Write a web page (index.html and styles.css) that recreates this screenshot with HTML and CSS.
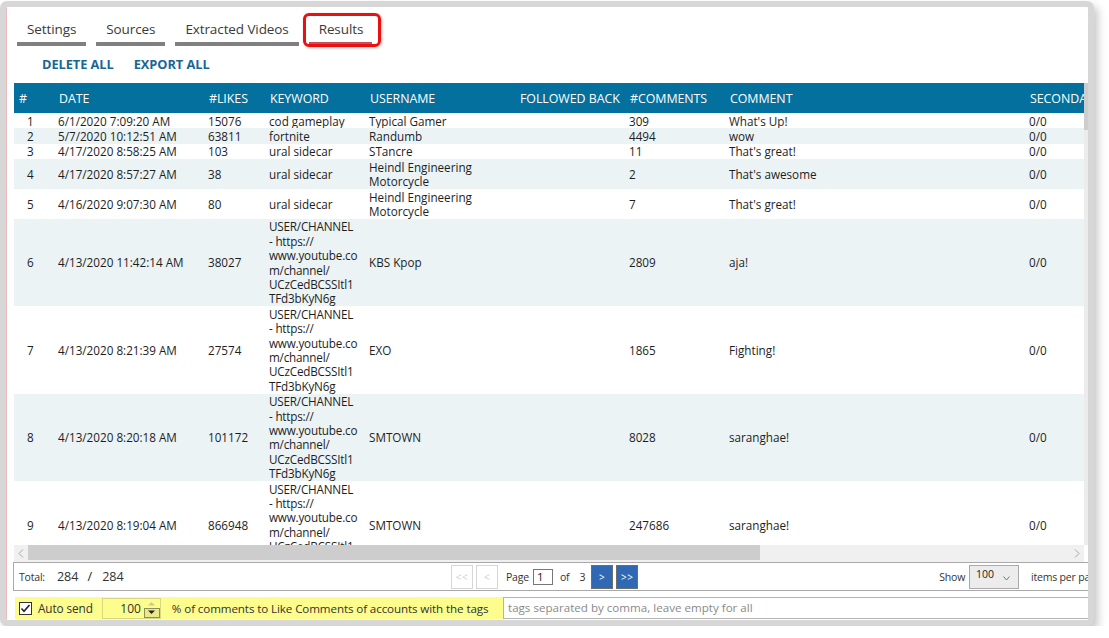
FILE: index.html
```html
<!DOCTYPE html>
<html>
<head>
<meta charset="utf-8">
<link rel="stylesheet" href="styles.css">
</head>
<body>
<div class="window">
  <div class="inner">
    <nav class="tabs">
      <div class="tab">Settings</div>
      <div class="tab">Sources</div>
      <div class="tab">Extracted Videos</div>
      <div class="tab active">Results</div>
    </nav>
    <div class="actions">
      <span class="action">DELETE ALL</span>
      <span class="action">EXPORT ALL</span>
    </div>
    <div class="grid-area">
      <div class="table-wrap">
        <div class="table-clip">
          <table class="results">
            <colgroup>
              <col class="c-num"><col class="c-date"><col class="c-likes"><col class="c-kw"><col class="c-user"><col class="c-fb"><col class="c-cc"><col class="c-com"><col class="c-sec">
            </colgroup>
            <thead>
              <tr><th>#</th><th>DATE</th><th>#LIKES</th><th>KEYWORD</th><th>USERNAME</th><th>FOLLOWED BACK</th><th>#COMMENTS</th><th>COMMENT</th><th>SECONDARY</th></tr>
            </thead>
            <tbody>
              <tr><td class="n">1</td><td>6/1/2020 7:09:20 AM</td><td>15076</td><td>cod gameplay</td><td>Typical Gamer</td><td></td><td>309</td><td>What's Up!</td><td>0/0</td></tr>
              <tr><td class="n">2</td><td>5/7/2020 10:12:51 AM</td><td>63811</td><td>fortnite</td><td>Randumb</td><td></td><td>4494</td><td>wow</td><td>0/0</td></tr>
              <tr><td class="n">3</td><td>4/17/2020 8:58:25 AM</td><td>103</td><td>ural sidecar</td><td>STancre</td><td></td><td>11</td><td>That's great!</td><td>0/0</td></tr>
              <tr><td class="n">4</td><td>4/17/2020 8:57:27 AM</td><td>38</td><td>ural sidecar</td><td>Heindl Engineering<br>Motorcycle</td><td></td><td>2</td><td>That's awesome</td><td>0/0</td></tr>
              <tr><td class="n">5</td><td>4/16/2020 9:07:30 AM</td><td>80</td><td>ural sidecar</td><td>Heindl Engineering<br>Motorcycle</td><td></td><td>7</td><td>That's great!</td><td>0/0</td></tr>
              <tr><td class="n">6</td><td>4/13/2020 11:42:14 AM</td><td>38027</td><td class="kw">USER/CHANNEL<br>- https://<br>www.youtube.co<br>m/channel/<br>UCzCedBCSSItl1<br>TFd3bKyN6g</td><td>KBS Kpop</td><td></td><td>2809</td><td>aja!</td><td>0/0</td></tr>
              <tr><td class="n">7</td><td>4/13/2020 8:21:39 AM</td><td>27574</td><td class="kw">USER/CHANNEL<br>- https://<br>www.youtube.co<br>m/channel/<br>UCzCedBCSSItl1<br>TFd3bKyN6g</td><td>EXO</td><td></td><td>1865</td><td>Fighting!</td><td>0/0</td></tr>
              <tr><td class="n">8</td><td>4/13/2020 8:20:18 AM</td><td>101172</td><td class="kw">USER/CHANNEL<br>- https://<br>www.youtube.co<br>m/channel/<br>UCzCedBCSSItl1<br>TFd3bKyN6g</td><td>SMTOWN</td><td></td><td>8028</td><td>saranghae!</td><td>0/0</td></tr>
              <tr><td class="n">9</td><td>4/13/2020 8:19:04 AM</td><td>866948</td><td class="kw">USER/CHANNEL<br>- https://<br>www.youtube.co<br>m/channel/<br>UCzCedBCSSItl1<br>TFd3bKyN6g</td><td>SMTOWN</td><td></td><td>247686</td><td>saranghae!</td><td>0/0</td></tr>
            </tbody>
          </table>
        </div>
        <div class="vscroll"><div class="vthumb"></div></div>
      </div>
      <div class="hscroll">
        <div class="harrow"><svg width="6" height="9" viewBox="0 0 6 9"><polyline points="5,0.5 1,4.5 5,8.5" fill="none" stroke="#a6a6a6" stroke-width="1"/></svg></div>
        <div class="htrack">
          <div class="hthumb"></div>
        </div>
        <div class="harrow"><svg width="6" height="9" viewBox="0 0 6 9"><polyline points="1,0.5 5,4.5 1,8.5" fill="none" stroke="#a6a6a6" stroke-width="1"/></svg></div>
      </div>
    </div>
    <div class="pager">
      <div class="total">
        <span class="lbl">Total:</span>
        <span class="tv">284</span>
        <span class="slash">/</span>
        <span class="tv">284</span>
      </div>
      <div class="pages">
        <span class="pbtn off">&lt;&lt;</span>
        <span class="pbtn off">&lt;</span>
        <span class="lbl pagelbl">Page</span>
        <span class="pageinput">1</span>
        <span class="lbl oflbl">of</span>
        <span class="lbl">3</span>
        <span class="pbtn on first-on">&gt;</span>
        <span class="pbtn on">&gt;&gt;</span>
      </div>
      <div class="show">
        <span class="lbl">Show</span>
        <span class="select"><span class="selv">100</span><svg width="7" height="5" viewBox="0 0 7 5"><polyline points="0.5,0.5 3.5,4 6.5,0.5" fill="none" stroke="#777" stroke-width="1"/></svg></span>
        <span class="lbl items">items per page</span>
      </div>
    </div>
    <div class="bottom">
      <div class="autosend">
        <span class="check"><svg width="13" height="13" viewBox="0 0 13 13"><rect x="0.5" y="0.5" width="12" height="12" fill="#fff" stroke="#333"/><polyline points="2.5,6.5 5,9.2 10.5,3" fill="none" stroke="#222" stroke-width="1.6"/></svg></span>
        <span class="aslbl">Auto send</span>
        <span class="numbox">
          <span class="numval">100</span>
          <span class="spin">
            <span class="up"><svg width="9" height="5" viewBox="0 0 9 5"><polygon points="1,4.5 4.5,1 8,4.5" fill="#c9c9a0"/></svg></span>
            <span class="down"><svg width="9" height="5" viewBox="0 0 9 5"><polygon points="1,0.5 4.5,4 8,0.5" fill="#222"/></svg></span>
          </span>
        </span>
        <span class="pct">% of comments to Like Comments of accounts with the tags</span>
      </div>
      <div class="tags">tags separated by comma, leave empty for all</div>
    </div>
  </div>
</div>
</body>
</html>
```

FILE: styles.css
```css
* { box-sizing: border-box; }
html, body { margin: 0; padding: 0; background: #fff; }
body { font-family: "Open Sans", "Noto Sans", sans-serif; color: #222; }

.window {
  width: 1094px;
  height: 625px;
  margin-top: 1px;
  border: 6px solid #d7d7d7;
  border-radius: 7px;
  box-shadow: 4px 5px 9px rgba(0, 0, 0, 0.22);
  background: #fff;
  overflow: hidden;
}
.inner {
  height: 100%;
  border-left: 1px solid #ecbcbc;
  padding-top: 13px;
  display: flex;
  flex-direction: column;
}

/* tabs */
.tabs { display: flex; gap: 10px; padding-left: 10px; }
.tab {
  position: relative;
  padding: 0 10px 4px;
  border-bottom: 4px solid #808080;
  font-size: 13.5px;
  line-height: 18px;
  color: #3a3a3a;
  letter-spacing: -0.1px;
}
.tab.active { border-bottom-color: #c8505a; padding: 0 9px 4px 10px; }
.tab.active::after {
  content: "";
  position: absolute;
  left: -6px; right: -9px; top: -7px; bottom: -5px;
  border: 3px solid #ea1010;
  border-radius: 6px;
  box-shadow: 1px 1px 3px rgba(0,0,0,0.25);
}

/* actions */
.actions { margin-top: 10px; padding-left: 35px; display: flex; gap: 20px; line-height: 16px; }
.action { font-weight: 700; font-size: 12.8px; color: #186597; letter-spacing: -0.05px; }

/* table */
.grid-area { margin-top: 11px; margin-left: 7px; width: 1074px; flex-shrink: 0; }
.table-wrap { display: flex; height: 462px; }
.table-clip { width: 1070px; height: 100%; overflow: hidden; flex-shrink: 0; }
.vscroll { width: 4px; height: 100%; background: #ececec; flex-shrink: 0; }
.vthumb { height: 47px; background: #cdcdcd; }

.results { border-collapse: collapse; table-layout: fixed; width: 1161px; }
.c-num { width: 40px; } .c-date { width: 150px; } .c-likes { width: 61px; }
.c-kw { width: 100px; } .c-user { width: 150px; } .c-fb { width: 110px; }
.c-cc { width: 100px; } .c-com { width: 300px; } .c-sec { width: 150px; }

.results th {
  background: #04709e;
  color: #fff;
  font-weight: 400;
  font-size: 12.4px;
  letter-spacing: -0.05px;
  height: 30px;
  text-align: left;
  padding: 0 4px 0 5px;
  white-space: nowrap;
  overflow: hidden;
}
.results td {
  font-size: 11.7px;
  letter-spacing: 0;
  line-height: 14.4px;
  padding: 0.5px 4px;
  vertical-align: middle;
  white-space: nowrap;
  overflow: hidden;
  color: #1e1e1e;
}
.results td.kw { letter-spacing: -0.2px; }
.results td.n { padding-left: 13px; }
.results tbody tr:nth-child(even) td { background: #ebf3f5; }

/* horizontal scroll */
.hscroll { display: flex; height: 17px; width: 1070px; background: #f0f0f0; }
.harrow { width: 14px; display: flex; align-items: center; justify-content: center; flex-shrink: 0; }
.htrack { flex: 1; }
.hthumb { width: 732px; height: 15px; background: #cdcdcd; }

/* pager */
.pager {
  margin-left: 6px;
  height: 29px;
  border: 1px solid #a9a9a9;
  border-right: none;
  display: flex;
  align-items: center;
  overflow: hidden;
  white-space: nowrap;
  flex-shrink: 0;
}
.pager > * { flex-shrink: 0; }
.lbl { font-size: 10.5px; color: #333; letter-spacing: -0.2px; }
.total { width: 437px; padding-left: 5px; display: flex; align-items: center; }
.total .tv { font-size: 12.6px; color: #333; }
.total .lbl { margin-right: 12px; }
.total .slash { font-size: 12.6px; margin: 0 10px 0 9px; }
.pages { display: flex; align-items: center; }
.pbtn {
  width: 22px; height: 24px;
  display: inline-flex; align-items: center; justify-content: center;
  font-size: 10px; letter-spacing: 0.5px;
  border: 1px solid #d6d6d6;
  color: #d0d0d0;
  margin-right: 3px;
  flex-shrink: 0;
}
.pbtn.on { background: #2f69b3; border-color: #6d6d6d; color: #fff; }
.pagelbl { margin-left: 5px; margin-right: 4px; }
.pageinput {
  width: 20px; height: 16px;
  border: 1px solid #777;
  font-size: 11.5px; line-height: 14px; padding-left: 3px;
  flex-shrink: 0;
}
.oflbl { margin-left: 7px; margin-right: 10px; }
.first-on { margin-left: 6px; }
.show { margin-left: 298px; display: flex; align-items: center; }
.select {
  margin-left: 4px;
  width: 50px; height: 24px;
  background: #ececec;
  border: 1px solid #a9a9a9;
  position: relative;
  display: inline-block;
  flex-shrink: 0;
}
.selv { position: absolute; left: 6px; top: 1px; font-size: 10.5px; color: #222; }
.select svg { position: absolute; right: 8px; top: 10px; }
.items { margin-left: 12px; }

/* bottom bar */
.bottom { margin-top: 6px; height: 22px; display: flex; margin-left: 8px; flex-shrink: 0; }
.autosend {
  width: 488px;
  flex-shrink: 0;
  background: #fdfd8e;
  display: flex;
  align-items: center;
  white-space: nowrap;
}
.autosend > * { flex-shrink: 0; }
.check { margin-left: 4px; display: flex; }
.aslbl { margin-left: 6px; font-size: 11.8px; color: #333; letter-spacing: -0.1px; }
.numbox {
  margin-left: 9px;
  width: 59px; height: 21px;
  border: 1px solid #d7d77e;
  display: flex;
  justify-content: flex-end;
}
.numval { font-size: 12px; line-height: 19px; color: #333; margin-right: 3px; }
.spin { width: 16px; display: flex; flex-direction: column; }
.spin .up { height: 9px; display: flex; align-items: center; justify-content: center; }
.spin .down { flex: 1; display: flex; align-items: center; justify-content: center; border: 1px solid #8f8f55; background: #e9e98a; }
.pct { margin-left: 11px; font-size: 11.6px; color: #333; letter-spacing: -0.1px; }
.tags {
  flex: 1;
  height: 22px;
  border: 1px solid #b3b3b3;
  border-right: none;
  font-size: 11.6px;
  color: #8a8a8a;
  line-height: 20px;
  padding-left: 4px;
  white-space: nowrap;
  overflow: hidden;
}
```
